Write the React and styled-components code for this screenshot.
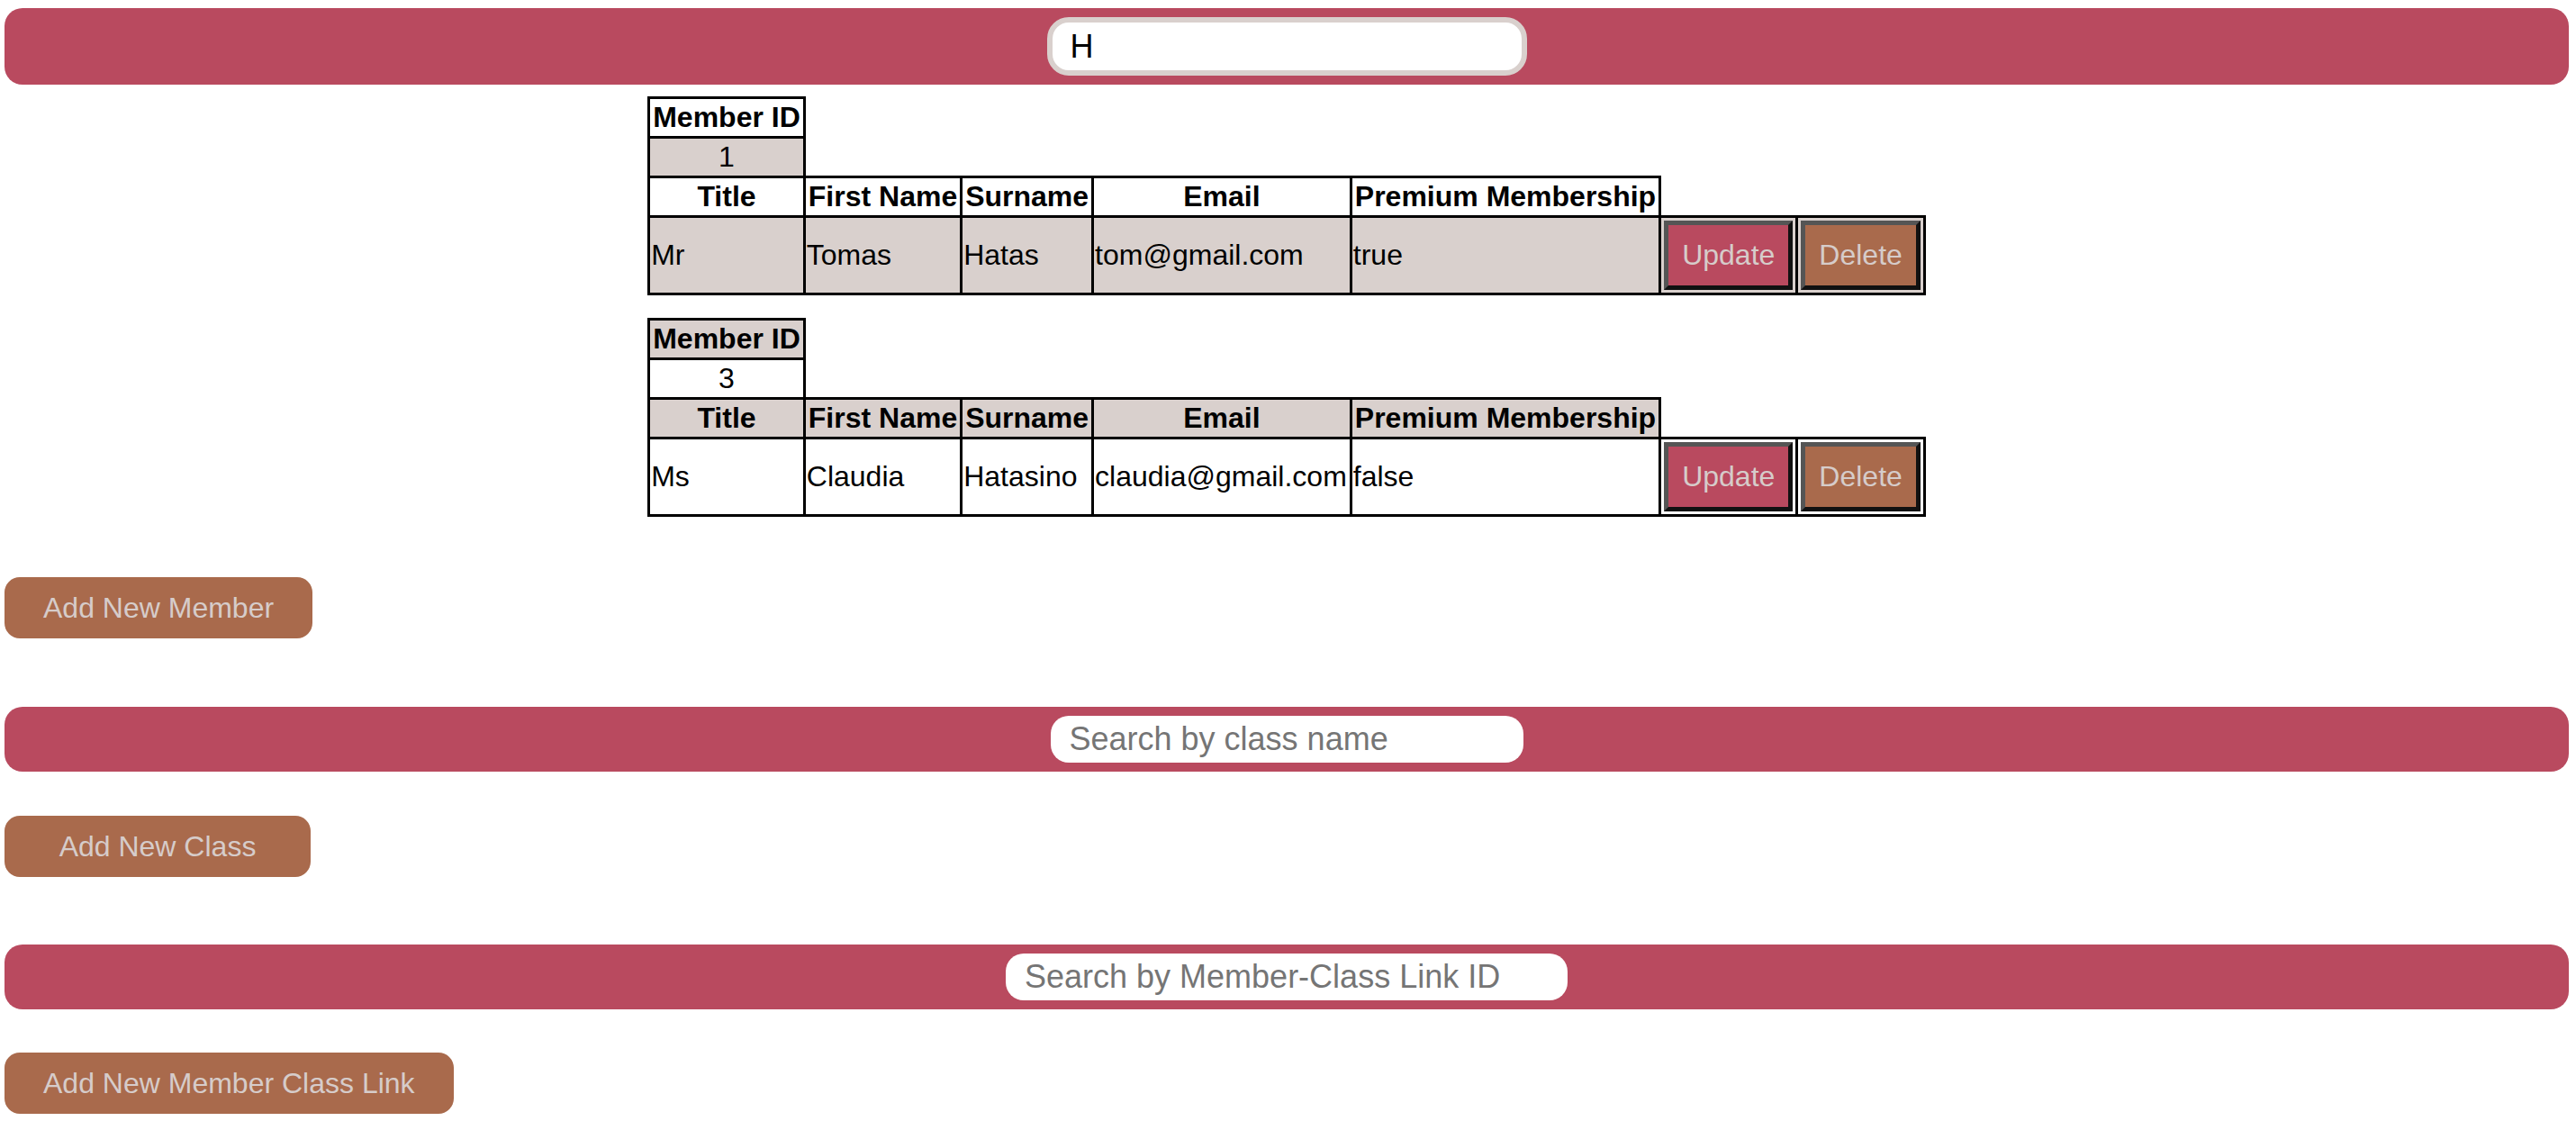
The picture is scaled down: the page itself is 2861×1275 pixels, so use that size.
import React from "react";
import styled, { createGlobalStyle } from "styled-components";

const GlobalStyle = createGlobalStyle`
  html, body {
    margin: 0;
    padding: 0;
    background: #ffffff;
  }
  body {
    font-family: "Liberation Sans", Arial, Helvetica, sans-serif;
  }
  * { box-sizing: border-box; }
`;

const PINK = "#b94a5f";
const BROWN = "#a96a4c";
const SAND = "#d9d0cd";

const Page = styled.div`
  display: flex;
  flex-direction: column;
  align-items: flex-start;
  padding: 9px 8px 40px 5px;
  min-height: 1275px;
`;

const SearchBar = styled.div`
  align-self: stretch;
  display: flex;
  justify-content: center;
  align-items: center;
  background: ${PINK};
  border-radius: 20px;
  padding: 10px 0;
  margin-top: ${(p) => p.$gap || 0}px;
`;

const SearchInput = styled.input`
  width: ${(p) => p.$width}px;
  height: ${(p) => (p.$active ? 65 : 52)}px;
  border-radius: ${(p) => (p.$active ? 24 : 20)}px;
  border: ${(p) => (p.$active ? `6px solid ${SAND}` : "none")};
  outline: none;
  background: #ffffff;
  font-family: "Liberation Sans", Arial, Helvetica, sans-serif;
  font-size: 36px;
  color: #000000;
  padding: 0 0 0 ${(p) => (p.$active ? 20 : 21)}px;
  caret-color: #000;
  &::placeholder {
    color: #757575;
  }
`;

const MembersTable = styled.table`
  align-self: center;
  margin-top: 13px;
  border-collapse: collapse;
  font-family: "Liberation Sans", Arial, Helvetica, sans-serif;
  font-size: 32px;
  color: #000;
`;

const Row = styled.tr`
  background: ${(p) => (p.$shade ? SAND : "#ffffff")};
`;

const HeadCell = styled.th`
  border: 3px solid #000;
  padding: 2px 3px;
  font-weight: bold;
  text-align: center;
  white-space: nowrap;
`;

const IdCell = styled.td`
  border: 3px solid #000;
  padding: 2px 3px;
  text-align: center;
`;

const DataCell = styled.td`
  border: 3px solid #000;
  padding: 2px 3px 2px 1px;
  text-align: left;
  white-space: nowrap;
`;

const ButtonCell = styled.td`
  border: 3px solid #000;
  padding: 3px;
`;

const SpacerCell = styled.td`
  border: none;
  height: 28px;
  padding: 0;
  background: #fff;
`;

const RowButton = styled.button`
  display: block;
  font-family: "Liberation Sans", Arial, Helvetica, sans-serif;
  font-size: 32px;
  line-height: 37px;
  color: #d6ccca;
  background: ${(p) => (p.$tone === "delete" ? BROWN : PINK)};
  border-style: solid;
  border-width: 5px;
  border-color: #555555 #111111 #111111 #555555;
  padding: 15px 15px;
  cursor: pointer;
`;

const ActionButton = styled.button`
  margin-top: ${(p) => p.$gap}px;
  min-width: 340px;
  height: 68px;
  padding: 0 43px;
  border: none;
  border-radius: 17px;
  background: ${BROWN};
  color: #d6ccca;
  font-family: "Liberation Sans", Arial, Helvetica, sans-serif;
  font-size: 32px;
  text-align: center;
  cursor: pointer;
`;

const members = [
  {
    id: 1,
    title: "Mr",
    first: "Tomas",
    surname: "Hatas",
    email: "tom@gmail.com",
    premium: "true",
  },
  {
    id: 3,
    title: "Ms",
    first: "Claudia",
    surname: "Hatasino",
    email: "claudia@gmail.com",
    premium: "false",
  },
];

function MemberRows({ m, offset }) {
  const shade = (i) => (i + offset) % 2 === 1;
  return (
    <>
      <Row $shade={shade(0)}>
        <HeadCell>Member ID</HeadCell>
      </Row>
      <Row $shade={shade(1)}>
        <IdCell>{m.id}</IdCell>
      </Row>
      <Row $shade={shade(2)}>
        <HeadCell>Title</HeadCell>
        <HeadCell>First Name</HeadCell>
        <HeadCell>Surname</HeadCell>
        <HeadCell>Email</HeadCell>
        <HeadCell>Premium Membership</HeadCell>
      </Row>
      <Row $shade={shade(3)}>
        <DataCell>{m.title}</DataCell>
        <DataCell>{m.first}</DataCell>
        <DataCell>{m.surname}</DataCell>
        <DataCell>{m.email}</DataCell>
        <DataCell>{m.premium}</DataCell>
        <ButtonCell>
          <RowButton $tone="update">Update</RowButton>
        </ButtonCell>
        <ButtonCell>
          <RowButton $tone="delete">Delete</RowButton>
        </ButtonCell>
      </Row>
    </>
  );
}

export default function App() {
  return (
    <>
      <GlobalStyle />
      <Page>
        <SearchBar>
          <SearchInput
            $width={533}
            $active
            defaultValue="H"
            autoFocus
            placeholder="Search by member name"
          />
        </SearchBar>

        <MembersTable>
          <tbody>
            <MemberRows m={members[0]} offset={0} />
            <tr>
              <SpacerCell colSpan={7} />
            </tr>
            <MemberRows m={members[1]} offset={1} />
          </tbody>
        </MembersTable>

        <ActionButton $gap={67}>Add New Member</ActionButton>

        <SearchBar $gap={76}>
          <SearchInput $width={525} placeholder="Search by class name" />
        </SearchBar>

        <ActionButton $gap={49}>Add New Class</ActionButton>

        <SearchBar $gap={75}>
          <SearchInput
            $width={624}
            placeholder="Search by Member-Class Link ID"
          />
        </SearchBar>

        <ActionButton $gap={48}>Add New Member Class Link</ActionButton>
      </Page>
    </>
  );
}
